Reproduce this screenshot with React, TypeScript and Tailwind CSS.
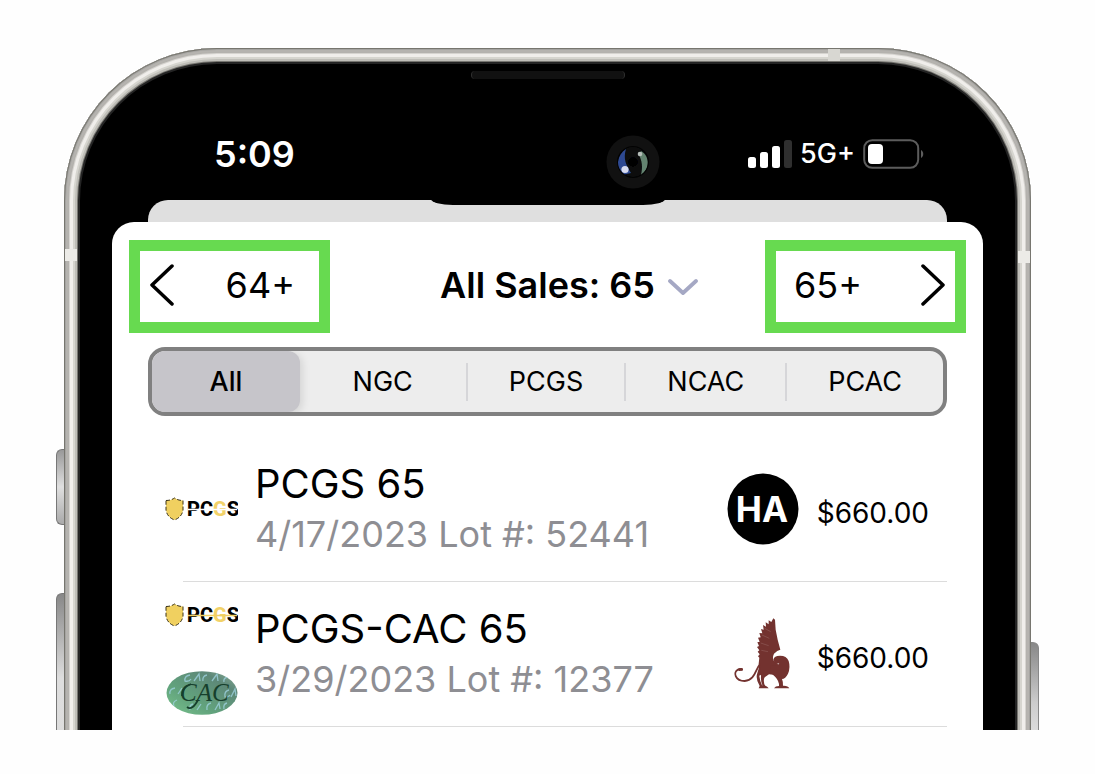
import { useState } from "react";

const tabs = ["All", "NGC", "PCGS", "NCAC", "PCAC"];

function SignalIcon() {
  return (
    <svg width="44" height="28" viewBox="0 0 44 28" aria-hidden="true">
      <rect x="0" y="17" width="8" height="11" rx="2.5" fill="#fff" />
      <rect x="12" y="12" width="8" height="16" rx="2.5" fill="#fff" />
      <rect x="24" y="6" width="8" height="22" rx="2.5" fill="#fff" />
      <rect x="36" y="0" width="8" height="28" rx="2.5" fill="#2f2f2f" />
    </svg>
  );
}

function BatteryIcon() {
  return (
    <svg width="62" height="30" viewBox="0 0 62 30" aria-hidden="true">
      <rect x="1.2" y="1.2" width="54" height="27.6" rx="8" fill="none" stroke="#5c5c5c" strokeWidth="2" />
      <rect x="5" y="5" width="15" height="20" rx="4" fill="#fff" />
      <path d="M58 11c3 1.4 3 6.6 0 8z" fill="#5c5c5c" />
    </svg>
  );
}

function Camera() {
  return (
    <svg width="54" height="54" viewBox="0 0 54 54" aria-hidden="true">
      <defs>
        <filter id="lens"><feGaussianBlur stdDeviation="0.7" /></filter>
        <clipPath id="lensClip"><circle cx="27" cy="27" r="15" /></clipPath>
      </defs>
      <circle cx="27" cy="27" r="26.5" fill="#111" />
      <circle cx="27" cy="27" r="16" fill="#030303" />
      <g clipPath="url(#lensClip)" filter="url(#lens)">
        <circle cx="27" cy="27" r="15" fill="#0c0d10" />
        <path d="M20 14C11 20 9 33 16 40L25 38C20 30 17 24 20 14Z" fill="#2f4a92" />
        <path d="M35 16C45 22 43 35 35 40C37 32 36 26 33 20Z" fill="#64836f" />
        <circle cx="27" cy="27" r="5" fill="#050505" />
        <circle cx="19" cy="34.5" r="3.6" fill="#d8dcf0" />
        <circle cx="34" cy="19" r="2.3" fill="#b5bdb8" />
      </g>
    </svg>
  );
}

function PcgsLogo({ line }: { line: string }) {
  return (
    <svg width="73" height="24" viewBox="0 0 73 24" role="img" aria-label="PCGS">
      <path d="M1 3.5Q6 3.5 9.5 1Q13 3.5 18 3.5V13Q17 20 9.5 23Q2 20 1 13Z" fill="#f0d060" />
      <path d="M1 3.5Q6 3.5 9.5 1Q13 3.5 18 3.5V13Q17 20 9.5 23Q2 20 1 13Z" fill="none" stroke="#3a3216" strokeWidth="1" strokeDasharray="4 2" />
      <text x="22" y="19" fontFamily="Roboto, sans-serif" fontWeight="800" fontSize="20" fill="#000">
        PC<tspan fill="#f2d268">G</tspan>S
      </text>
      <path d="M23 12.5H72" stroke={line} strokeWidth="1.5" />
    </svg>
  );
}

function CacLogo() {
  return (
    <svg width="72" height="44" viewBox="0 0 72 44" role="img" aria-label="CAC">
      <defs>
        <linearGradient id="cac" x1="0" y1="1" x2="1" y2="0">
          <stop offset="0" stopColor="#79c38c" />
          <stop offset="0.35" stopColor="#62a37d" />
          <stop offset="0.75" stopColor="#5d8878" />
          <stop offset="1" stopColor="#8fb09b" />
        </linearGradient>
        <clipPath id="cacClip"><ellipse cx="36" cy="22" rx="35.5" ry="21.8" /></clipPath>
      </defs>
      <ellipse cx="36" cy="22" rx="35.5" ry="21.8" fill="url(#cac)" />
      <g clipPath="url(#cacClip)">
        <path
          d="M24 4q-6 1-5 6q4 1 6-2M28 10l5-7l1 7M41 4q-5 1-4 6M46 10l5-7l1 7M62 6q-5 1-4 5M9 17q-6 1-5 6M12 23l4-6M63 19q-5 1-4 7q4 0 5-2M65 26l4-8l1 7M11 29q-5 2-3 6M27 33q-4 1-3 6M31 39l4-6M45 32q-5 1-4 7M49 39l4-7l1 6M61 32q-4 1-3 6"
          fill="none"
          stroke="#9ccfdc"
          strokeWidth="1.3"
          opacity="0.8"
        />
        <text x="14" y="30" fontFamily="Liberation Serif, serif" fontStyle="italic" fontSize="25" fill="#163f2c">CAC</text>
        <path d="M32 29Q26 40 21 36M25 13Q15 17 16 25" fill="none" stroke="#163f2c" strokeWidth="1.8" />
      </g>
    </svg>
  );
}

function HeritageLogo() {
  return (
    <svg width="72" height="72" viewBox="0 0 72 72" role="img" aria-label="HA">
      <circle cx="36" cy="36" r="35.5" fill="#000" />
      <text x="35" y="49" textAnchor="middle" fontFamily="Inter, sans-serif" fontWeight="700" fontSize="35" fill="#fff">HA</text>
    </svg>
  );
}

function GriffinLogo() {
  return (
    <svg width="72" height="72" viewBox="9 53 216 216" role="img" aria-label="Griffin">
      <g fill="#73322f">
        <path d="M148 54L153 58L155 88L161 118L169 148Q160 150 150 160Q145 170 148 180L162 192L160 225L135 222L120 232L106 222L104 190L106 172L102 168L107 162L101 154L106 150L99 140L105 137L100 126L107 124L102 112L110 111L106 98L115 99L111 86L119 88L117 74L126 79L125 66L134 72L134 60L142 65Z" />
        <path d="M148 178Q150 166 168 166Q188 166 194 182Q200 202 192 220Q184 236 174 236Q178 246 177 256Q192 255 196 264H150Q154 257 165 257Q166 243 154 230L138 215L140 196Q160 200 166 188Q154 196 148 178Z" />
        <path d="M107 195Q113 220 106 228Q108 244 114 255Q128 255 134 264H104L107 257Q95 238 99 222Z" />
        <path d="M118 215Q124 226 120 236Q118 248 124 257H116Q108 240 112 222Z" />
      </g>
      <path d="M108 192C94 205 94 240 62 242C34 242 26 216 42 208Q52 203 54 208" fill="none" stroke="#73322f" strokeWidth="5.5" strokeLinecap="round" />
      <path d="M46 208l7-1" stroke="#73322f" strokeWidth="8" strokeLinecap="round" />
      <path d="M112 150l20 4M110 128l24 8M114 104l22 10M122 84l18 10" stroke="#8f5a57" strokeWidth="2" />
    </svg>
  );
}

const sales = [
  { title: "PCGS 65", detail: "4/17/2023 Lot #: 52441", price: "$660.00", cac: false },
  { title: "PCGS-CAC 65", detail: "3/29/2023 Lot #: 12377", price: "$660.00", cac: true },
];

export default function App() {
  const [active, setActive] = useState("All");

  return (
    <main className="min-h-screen bg-[#fefefe] pt-12 font-['Inter',sans-serif] text-black">
      <div className="overflow-hidden">
        <div className="relative mx-16 -mb-[33px] rounded-t-[153px] bg-black p-4">
          {/* Side keys */}
          <div className="absolute top-[401px] -left-2 h-[76px] w-2 rounded-l-md border border-r-0 border-[#777] bg-linear-to-b from-[#999] via-[#e0e0e0] to-[#aaa]" />
          <div className="absolute top-[545px] bottom-0 -left-2 w-2 rounded-l-md border border-r-0 border-[#777] bg-linear-to-b from-[#888] via-[#dedede] to-[#ddd]" />
          <div className="absolute top-[594px] -right-2 bottom-0 w-2 rounded-r-md border border-l-0 border-[#888] bg-linear-to-b from-[#888] via-[#ccc] to-[#eee]" />
          {/* Metal rim */}
          <div className="pointer-events-none absolute inset-0 rounded-t-[153px] shadow-[inset_0_0_0_1px_#77766f,inset_0_0_0_2px_#a5a4a1,inset_0_0_0_4px_#b5b3af,inset_0_0_0_5px_#b4b2ae,inset_0_0_0_6px_#d6d4d0,inset_0_0_0_9px_#f0eeeb,inset_0_0_0_11px_#d6d5cf,inset_0_0_0_13px_#bfbeb8,inset_0_0_0_14px_#777671,inset_0_0_0_16px_#242424]" />
          <div className="absolute top-px right-[191px] h-3 w-3 bg-[#d8d7d2]" />
          <div className="absolute top-[201px] left-px h-3 w-3 bg-[#ecebe7]" />
          <div className="absolute top-[203px] right-px h-3 w-3 bg-[#ecebe7]" />
          <div className="absolute top-[23px] left-1/2 h-2 w-[154px] -translate-x-1/2 rounded-full border-x border-[#303030] bg-[#111]" />

          <div className="flex h-[136px] items-center justify-between pt-11 pr-[90px] pl-[134px] text-white">
            <time className="text-[36px] leading-[40px] font-semibold">5:09</time>
            <div className="flex items-center gap-2">
              <SignalIcon />
              <span className="text-[27px] leading-[32px] font-medium">5G+</span>
              <BatteryIcon />
            </div>
          </div>

          {/* Sheet underneath, with the sensor housing over it */}
          <div className="relative mx-[68px] h-[22px] rounded-t-[20px] bg-[#dfdfdf]">
            <div className="absolute -top-px left-1/2 h-1.5 w-[234px] -translate-x-1/2 rounded-b-[22px_6px] bg-black" />
            <div className="absolute -top-[65px] left-[458px]"><Camera /></div>
          </div>

          <section className="relative mx-8 rounded-t-[22px] bg-white pb-5">
            <header className="flex items-center justify-between px-[17px] pt-[18px]">
              <button type="button" className="flex h-[93px] w-[201px] items-center justify-between border-[11px] border-[#67da50] pr-[24px] pb-1 pl-[9px]">
                <svg width="26" height="42" viewBox="0 0 26 42" fill="none" stroke="#000" strokeWidth="3.5" strokeLinecap="round" strokeLinejoin="round" aria-hidden="true"><path d="M23 2L3 21L23 40" /></svg>
                <span className="text-[36px] leading-[40px]">64+</span>
              </button>
              <button type="button" className="ml-11 flex items-center gap-3 pb-1">
                <span className="text-[36px] leading-[40px] font-semibold">All Sales: 65</span>
                <svg width="32" height="20" viewBox="0 0 32 20" fill="none" stroke="#a5a8c4" strokeWidth="3.8" strokeLinecap="round" strokeLinejoin="round" aria-hidden="true"><path d="M3 6L16 18L29 6" /></svg>
              </button>
              <button type="button" className="flex h-[93px] w-[201px] items-center justify-between border-[11px] border-[#67da50] pr-[9px] pb-1 pl-[18px]">
                <span className="text-[36px] leading-[40px]">65+</span>
                <svg width="26" height="42" viewBox="0 0 26 42" fill="none" stroke="#000" strokeWidth="3.5" strokeLinecap="round" strokeLinejoin="round" aria-hidden="true"><path d="M3 2L23 21L3 40" /></svg>
              </button>
            </header>

            <div className="px-9">
              <div className="mt-3.5 grid h-[69px] grid-cols-[148fr_166fr_159fr_161fr_158fr] items-center overflow-hidden rounded-[17px] border-4 border-[#808080] bg-[#ededed]">
                {tabs.map((tab, i) => (
                  <button
                    key={tab}
                    type="button"
                    aria-pressed={active === tab}
                    onClick={() => setActive(tab)}
                    className={
                      active === tab
                        ? "h-full rounded-xl bg-[#c6c5ca] text-[27px] leading-[32px] font-medium shadow-[2px_2px_8px_rgba(0,0,0,0.12)]"
                        : i > 1
                          ? "h-[38px] border-l-2 border-[#d6d6d9] text-[27px] leading-[32px]"
                          : "h-[38px] text-[27px] leading-[32px]"
                    }
                  >
                    {tab}
                  </button>
                ))}
              </div>

              <ul className="mt-[21px]">
                {sales.map((sale) => (
                  <li key={sale.title}>
                    <div className="flex h-[144px] items-center pr-[18px] pl-[17px]">
                      {sale.cac ? (
                        <div className="flex w-[73px] flex-col items-center gap-11 pt-2.5">
                          <PcgsLogo line="#f0cf62" />
                          <CacLogo />
                        </div>
                      ) : (
                        <PcgsLogo line="#ffffff" />
                      )}
                      <div className="ml-[17px] flex-1">
                        <h2 className="text-[40px] leading-[50px]">{sale.title}</h2>
                        <p className="text-[36px] leading-[50px] text-[#8e8e93]">{sale.detail}</p>
                      </div>
                      {sale.cac ? <GriffinLogo /> : <HeritageLogo />}
                      <span className="ml-[18px] pt-2 text-[28px] leading-[32px]">{sale.price}</span>
                    </div>
                    <hr className="ml-[35px] border-[#dcdcdc]" />
                  </li>
                ))}
              </ul>
            </div>
          </section>
        </div>
      </div>
    </main>
  );
}
